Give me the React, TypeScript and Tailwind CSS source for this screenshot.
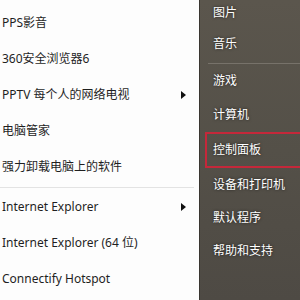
import React from "react";

const font = { fontFamily: '"Noto Sans", "Noto Sans CJK SC", sans-serif' };

function Arrow() {
  return (
    <svg width="5" height="8" viewBox="0 0 5 8" className="absolute left-[181px]">
      <polygon points="0,0 5,4 0,8" fill="#111" />
    </svg>
  );
}

function LRow({ text, arrow }: { text: string; arrow?: boolean }) {
  return (
    <div className="relative flex h-[36px] items-center pl-[2px] text-[12px] text-[#1f1f1f]">
      <span>{text}</span>
      {arrow && <Arrow />}
    </div>
  );
}

function RRow({ text, h }: { text: string; h: string }) {
  return (
    <div className={`flex items-center pl-[13px] text-[12px] text-white [text-shadow:0_0_3px_rgba(0,0,0,0.7)] ${h}`}>
      {text}
    </div>
  );
}

export default function App() {
  return (
    <div className="flex h-[300px] w-[300px] overflow-hidden bg-white" style={font}>
      <div className="flex w-[199px] shrink-0 flex-col bg-[#fdfdfd] pt-[5px]">
        <LRow text="PPS影音" />
        <LRow text="360安全浏览器6" />
        <LRow text="PPTV 每个人的网络电视" arrow />
        <LRow text="电脑管家" />
        <LRow text="强力卸载电脑上的软件" />
        <div className="mb-[1px] mt-[2px] h-[1px] w-[194px] bg-[#e3e3e3]" />
        <LRow text="Internet Explorer" arrow />
        <LRow text="Internet Explorer (64 位)" />
        <LRow text="Connectify Hotspot" />
      </div>
      <div className="flex w-[101px] shrink-0 flex-col border-l border-[#3a3631] bg-gradient-to-b from-[#5b564d] via-[#545048] to-[#4e4a44]">
        <RRow text="图片" h="h-[25px]" />
        <RRow text="音乐" h="h-[38px]" />
        <div className="ml-[8px] h-[1px] bg-[#77726a]" />
        <RRow text="游戏" h="h-[33px]" />
        <RRow text="计算机" h="h-[35px]" />
        <div className="-mr-[10px] ml-[5px] flex h-[36px] items-center border-2 border-[#c5283a] pl-[6px] text-[12px] text-white [text-shadow:0_0_3px_rgba(0,0,0,0.7)]">
          控制面板
        </div>
        <RRow text="设备和打印机" h="h-[33px]" />
        <RRow text="默认程序" h="h-[33px]" />
        <RRow text="帮助和支持" h="h-[34px]" />
      </div>
    </div>
  );
}
